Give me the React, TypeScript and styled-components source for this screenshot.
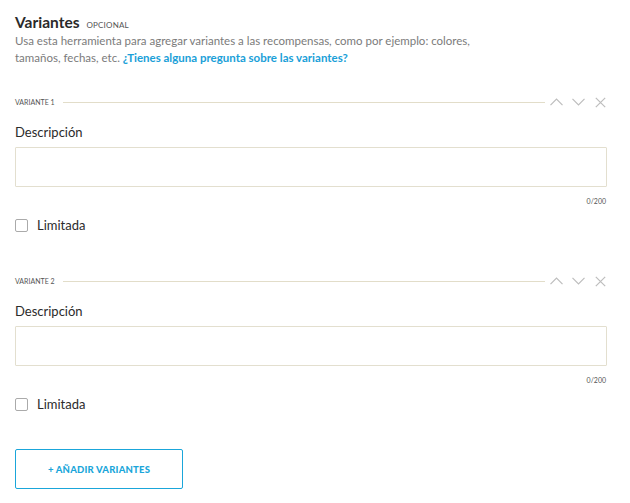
import React from "react";
import styled, { createGlobalStyle } from "styled-components";

const Global = createGlobalStyle`
  html, body { margin: 0; padding: 0; background: #fff; }
  body { font-family: Lato, "Open Sans", sans-serif; color: #2b2b2b; }
`;

const Page = styled.div`
  width: 592px;
  padding: 14px 15px 0 15px;
`;

const TitleRow = styled.div`
  display: flex;
  align-items: baseline;
  gap: 7px;
  height: 17px;
`;

const Title = styled.h2`
  margin: 0;
  font-size: 15.5px;
  font-weight: 700;
  color: #2a2a2a;
  line-height: 17px;
`;

const Optional = styled.span`
  font-size: 8px;
  color: #555;
  letter-spacing: 0.2px;
`;

const Help = styled.p`
  margin: 1px 0 0 0;
  font-size: 11.5px;
  line-height: 17px;
  color: #7b7b7b;
  width: 520px;
`;

const Link = styled.a`
  color: #1aa0d8;
  font-weight: 700;
  text-decoration: none;
`;

const Variant = styled.section`
  margin-top: 30px;
  & + & { margin-top: 42px; }
`;

const Header = styled.div`
  display: flex;
  align-items: center;
  height: 12px;
`;

const HeaderLabel = styled.span`
  font-size: 7px;
  color: #555;
  white-space: nowrap;
`;

const Rule = styled.div`
  flex: 1;
  height: 1px;
  background: #e2ddc9;
  margin: 0 5px 0 8px;
`;

const Actions = styled.div`
  display: flex;
  align-items: center;
  gap: 9px;
`;

const IconBtn = styled.button`
  border: 0;
  padding: 0;
  background: none;
  width: 13px;
  height: 12px;
  display: flex;
  align-items: center;
  justify-content: center;
`;

const Label = styled.label`
  display: block;
  margin-top: 16px;
  font-size: 13px;
  line-height: 16px;
  color: #2b2b2b;
`;

const Input = styled.input`
  display: block;
  box-sizing: border-box;
  width: 592px;
  height: 40px;
  margin-top: 7px;
  border: 1px solid #e3dfcf;
  border-radius: 1px;
  outline: none;
  background: #fff;
`;

const Counter = styled.div`
  text-align: right;
  font-size: 7px;
  color: #555;
  margin-top: 9px;
  padding-right: 1px;
  line-height: 10px;
`;

const CheckRow = styled.label`
  display: flex;
  align-items: center;
  gap: 9px;
  margin-top: 11px;
  font-size: 13px;
  color: #2b2b2b;
`;

const Box = styled.span`
  width: 13px;
  height: 13px;
  box-sizing: border-box;
  border: 1px solid #aaa;
  border-radius: 2px;
`;

const AddButton = styled.button`
  margin-top: 37px;
  width: 168px;
  height: 40px;
  border: 1px solid #1aa6da;
  border-radius: 2px;
  background: #fff;
  color: #1aa6da;
  font-family: Lato, sans-serif;
  font-weight: 900;
  font-size: 9.5px;
  letter-spacing: 0.2px;
`;

const Up = () => (
  <svg width="13" height="8" viewBox="0 0 13 8" fill="none" stroke="#bdbdbd" strokeWidth="1.2">
    <path d="M0.5 7.2 L6.5 1.2 L12.5 7.2" />
  </svg>
);
const Down = () => (
  <svg width="13" height="8" viewBox="0 0 13 8" fill="none" stroke="#bdbdbd" strokeWidth="1.2">
    <path d="M0.5 0.8 L6.5 6.8 L12.5 0.8" />
  </svg>
);
const Close = () => (
  <svg width="11" height="11" viewBox="0 0 11 11" fill="none" stroke="#bdbdbd" strokeWidth="1.2">
    <path d="M0.8 0.8 L10.2 10.2 M10.2 0.8 L0.8 10.2" />
  </svg>
);

const VariantBlock = ({ n }: { n: number }) => (
  <Variant>
    <Header>
      <HeaderLabel>VARIANTE {n}</HeaderLabel>
      <Rule />
      <Actions>
        <IconBtn><Up /></IconBtn>
        <IconBtn><Down /></IconBtn>
        <IconBtn><Close /></IconBtn>
      </Actions>
    </Header>
    <Label>Descripción</Label>
    <Input />
    <Counter>0/200</Counter>
    <CheckRow>
      <Box />
      Limitada
    </CheckRow>
  </Variant>
);

export default function App() {
  return (
    <Page>
      <Global />
      <TitleRow>
        <Title>Variantes</Title>
        <Optional>OPCIONAL</Optional>
      </TitleRow>
      <Help>
        Usa esta herramienta para agregar variantes a las recompensas, como por ejemplo: colores,
        <br />
        tamaños, fechas, etc. <Link href="#">¿Tienes alguna pregunta sobre las variantes?</Link>
      </Help>
      <VariantBlock n={1} />
      <VariantBlock n={2} />
      <AddButton>+ AÑADIR VARIANTES</AddButton>
    </Page>
  );
}
